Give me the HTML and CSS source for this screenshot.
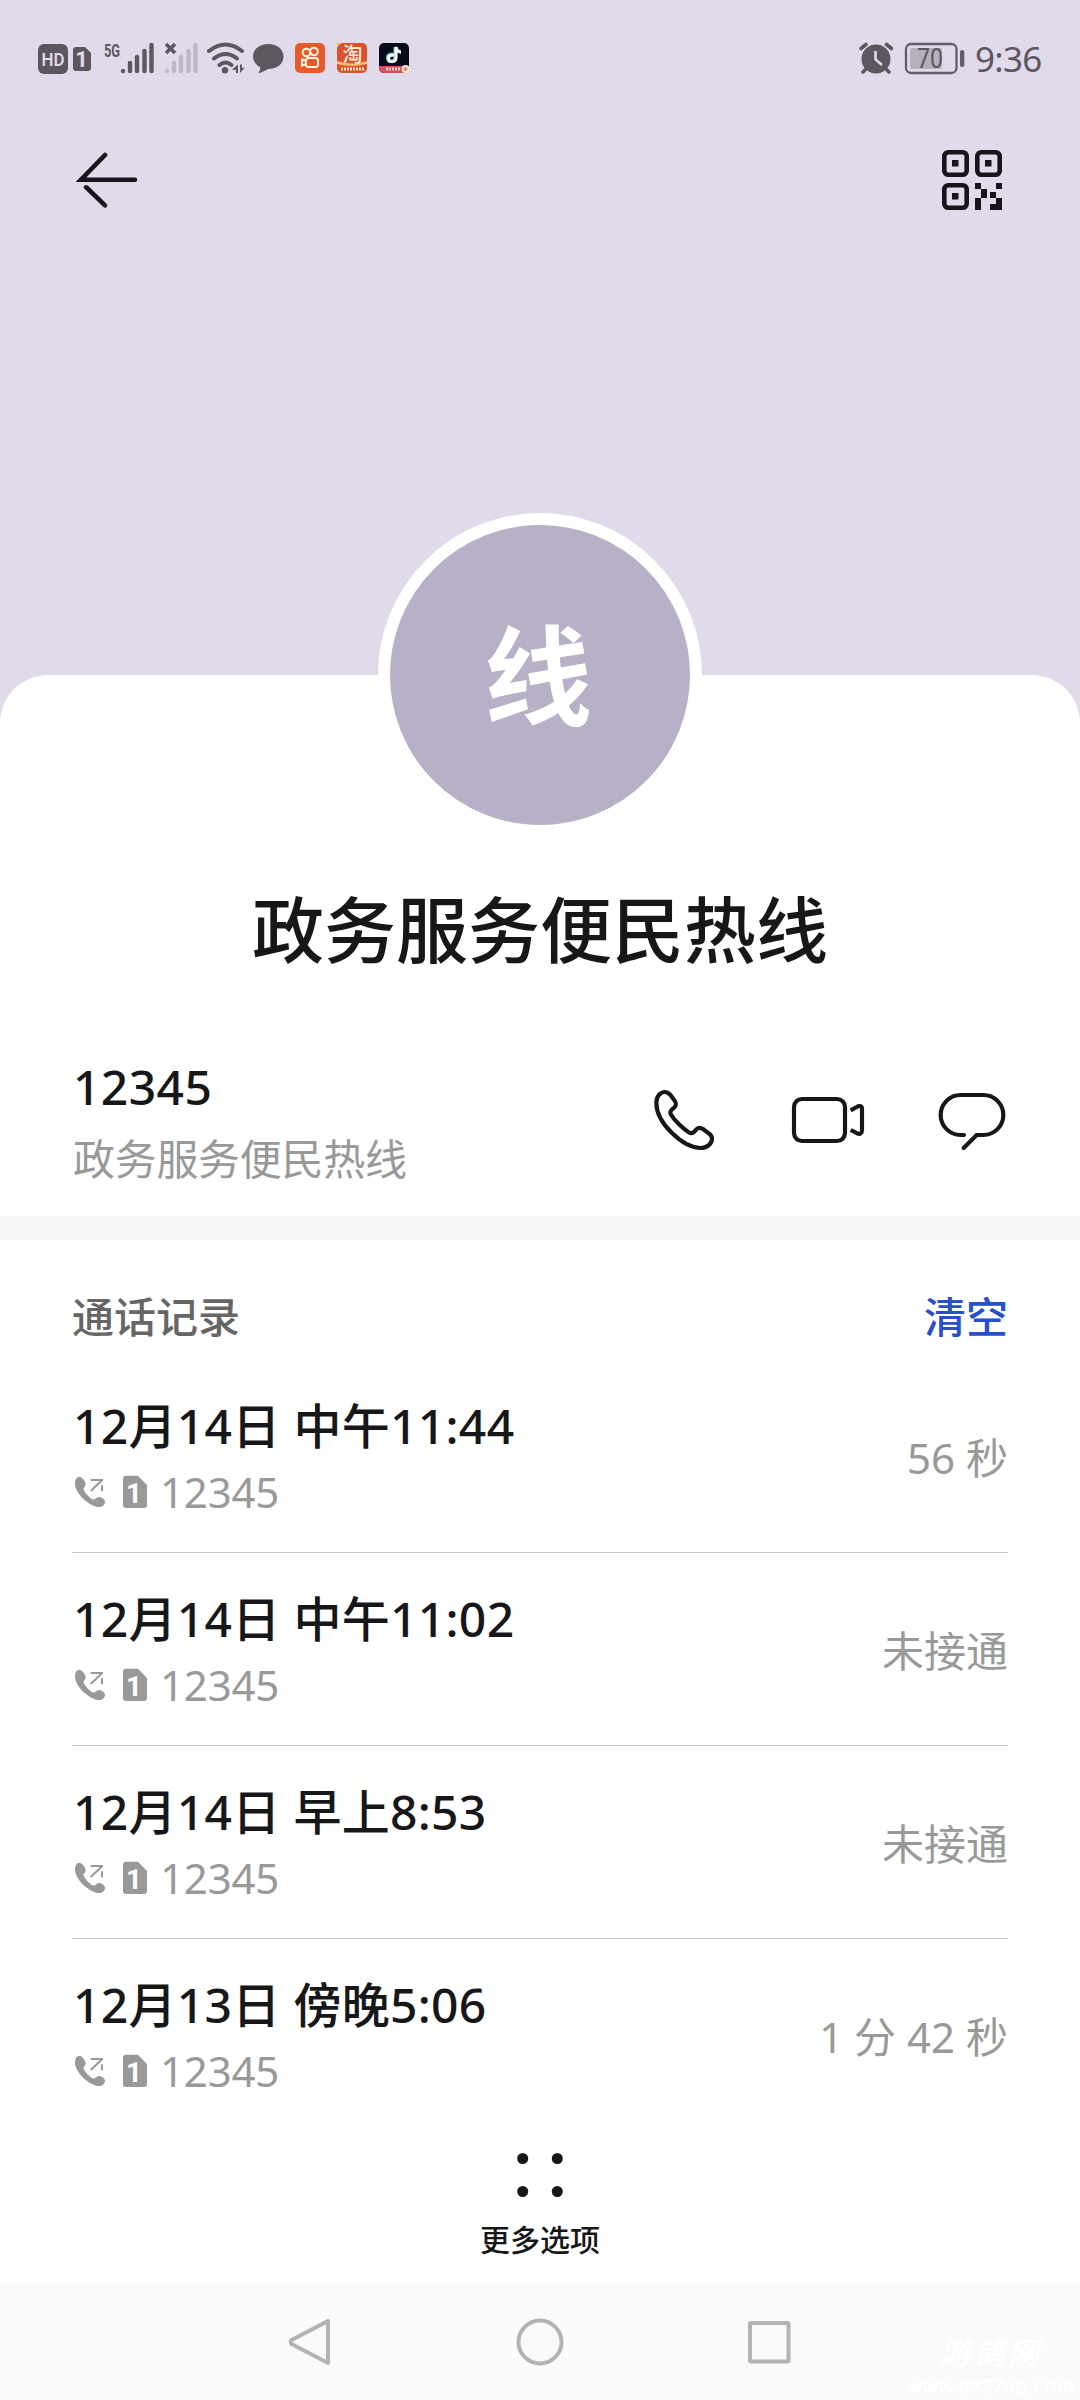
FILE: index.html
```html
<!DOCTYPE html>
<html lang="zh-CN">
<head>
<meta charset="utf-8">
<title>政务服务便民热线</title>
<link rel="stylesheet" href="styles.css">
</head>
<body>
<svg class="defs" aria-hidden="true">
  <symbol id="outgoing" viewBox="39 609 228 108">
    <path d="M58 617C50 617 45 626 45 638C45 668 90 708 118 708C128 708 135 700 135 692C135 684 122 676 115 678C108 680 104 688 98 685C88 680 74 664 71 656C69 650 77 648 77 640C77 632 66 617 58 617Z" fill="#999"/>
    <path d="M92 627H129M127 627L92 660M126 643V661" fill="none" stroke="#999" stroke-width="6"/>
    <path d="M198 614H234L261 642V702Q261 711 252 711H198Q189 711 189 702V623Q189 614 198 614Z" fill="#999"/>
    <text x="222" y="695" class="sim-digit">1</text>
  </symbol>
</svg>
<div class="screen">
  <header class="hero">
    <div class="status">
      <div class="status-left">
        <svg width="32" height="40" viewBox="38 38 32 40"><rect x="38" y="44" width="30" height="30" rx="6" fill="#5c565f"/><text x="53" y="66" class="hd" textLength="23" lengthAdjust="spacingAndGlyphs">HD</text></svg>
        <svg width="30" height="40" viewBox="70 38 30 40"><path d="M76 47H85L91 53V68Q91 71 88 71H76Q73 71 73 68V50Q73 47 76 47Z" fill="#5c565f"/><text x="81.5" y="67" class="sim">1</text></svg>
        <svg width="60" height="40" viewBox="100 38 60 40"><text x="112" y="56.500" class="net" textLength="16" lengthAdjust="spacingAndGlyphs">5G</text><path d="M123 71V71M130 63V71M137 57V71M144.500 51V71M151.500 45V71" class="bars"/></svg>
        <svg width="42" height="40" viewBox="160 38 42 40"><path d="M166 44L175 53M175 44L166 53" class="cross"/><path d="M167 71V71M174 63V71M181 57V71M188.500 51V71M195.500 45V71" class="bars dim"/></svg>
        <svg width="48" height="40" viewBox="202 38 48 40"><path d="M209 51Q225.500 38 242 51M214 58.500Q225.500 49.500 237 58.500M219.500 65Q225.500 60 231.500 65" class="wifi"/><circle cx="225" cy="70.300" r="3.200" fill="#5c565f"/><path d="M232 69.500L238 64.500V73H236V70ZM240 64.500V73L245 67.500L242 68V64.500Z" fill="#5c565f"/></svg>
        <svg width="40" height="40" viewBox="250 38 40 40"><path d="M268.500 44C277 44 283.500 49 283.500 56.500C283.500 64 277 69 268.500 69C264 71 261 73 258 73C260 71 260.500 69 260 67C256 65 253 61 253 56.500C253 49 260 44 268.500 44Z" fill="#5c565f"/></svg>
        <svg width="41" height="40" viewBox="290 38 41 40"><rect x="295" y="43" width="30" height="30" rx="5" fill="#e65a2c"/><g fill="none" stroke="#fff2df" stroke-width="2"><circle cx="306.500" cy="52.500" r="3.800"/><circle cx="314" cy="51.500" r="3.800"/><rect x="306" y="58" width="12" height="9" rx="2.500"/><path d="M306 61L302 59.500V65.500L306 64"/></g></svg>
        <svg width="42" height="40" viewBox="331 38 42 40"><rect x="337" y="43" width="30" height="30" rx="5" fill="#da512c"/><path d="M337 48Q340 43 343 43H337ZM337 61Q352 66 367 61V64Q352 68 337 64Z" fill="#f3bd78"/><text x="352.500" y="62" class="tao">淘</text><path d="M341 69H364" stroke="#ffe0b5" stroke-width="3" stroke-dasharray="2 1"/></svg>
        <svg width="42" height="40" viewBox="373 38 42 40"><rect x="379" y="43" width="30" height="30" rx="5" fill="#080b19"/><path d="M379 66H409V68Q409 73 404 73H384Q379 73 379 68Z" fill="#d74d5c"/><g fill="none" stroke-width="3"><path d="M393 54Q387 54 387.500 58Q388 62 392 61.500Q395 61 395 58V47Q396 52 401 52" stroke="#4cd5d7"/><path d="M394 55Q388 55 388.500 58.500Q389 62 392.500 61.500Q396 61 396 58V47Q397 52 401 52" stroke="#fff"/></g><path d="M386 69H400" stroke="#ffc5c5" stroke-width="3" stroke-dasharray="2 1"/><circle cx="405.500" cy="69" r="4" fill="#ffe3c8"/><path d="M405.500 67V71M403.500 69H407.500" stroke="#df5b58"/></svg>
      </div>
      <div class="status-right">
        <svg width="43" height="40" viewBox="857 38 43 40"><circle cx="876" cy="59" r="14.500" fill="#5c565f"/><path d="M861 48.500L866 44.500M891.500 48.500L886.500 44.500M866 69L863 72M886 69L889 72" class="alarm"/><path d="M875.500 51V59.500L882 65" fill="none" stroke="#e1daea" stroke-width="2.600"/></svg>
        <svg width="68" height="40" viewBox="900 38 68 40"><rect x="906" y="44" width="50.500" height="29" rx="5" fill="none" stroke="#625d66" stroke-width="2.300"/><rect x="910" y="48" width="32" height="21" rx="2" fill="#b5b0bc"/><rect x="960" y="50" width="4.300" height="17" rx="2" fill="#625d66"/><text x="930" y="68" class="pct" textLength="26" lengthAdjust="spacingAndGlyphs">70</text></svg>
        <span class="clock">9:36</span>
      </div>
    </div>
    <div class="toolbar">
      <svg width="64" height="64" viewBox="76 148 64 64" fill="none" stroke="#17151a" stroke-width="4.600" stroke-linecap="round"><path d="M105 155L81 179.700H135"/><path d="M86 187L105 205.300"/><path d="M82 184.500H92" stroke="#e1daea" stroke-width="1.500"/></svg>
      <svg width="60" height="60" viewBox="942 150 60 60"><g fill="none" stroke="#17151a" stroke-width="4.600"><rect x="944.300" y="152.300" width="22.400" height="22.400" rx="4"/><rect x="977.300" y="152.300" width="22.400" height="22.400" rx="4"/><rect x="944.300" y="185.300" width="22.400" height="22.400" rx="4"/></g><path fill="#17151a" d="M952 160h6.500v6.500h-6.500zM985 160h6.500v6.500h-6.500zM952 193h6.500v6.500h-6.500zM975 183h6v6h-6zM981 189h6v9h-6zM975 198h6v12h-6zM996 183h6v6h-6zM990 192h6v6h-6zM996 198h6v12h-12v-6h6z"/></svg>
    </div>
  </header>

  <main class="sheet">
    <div class="avatar">线</div>
    <h1 class="name">政务服务便民热线</h1>
    <section class="contact">
      <div class="contact-text">
        <div class="number">12345</div>
        <div class="label">政务服务便民热线</div>
      </div>
      <div class="actions">
        <svg width="68" height="68" viewBox="60 78 204 204"><path d="M104 96C92 96 79 108 79 128C79 190 160 264 212 264C232 264 246 250 246 236C246 228 242 224 236 220L220 208C209 201 203 203 198 209C192 217 186 222 178 218C158 206 132 180 122 162C118 154 124 150 130 145C138 139 141 131 134 122L122 106C116 98 110 96 104 96Z"/></svg>
        <svg width="76" height="68" viewBox="480 78 228 204"><rect x="492" y="117" width="153" height="126" rx="24"/><path d="M662 151L680 141C690 135 696 139 696 147V211C696 221 690 224 682 220L662 210"/></svg>
        <svg width="72" height="68" viewBox="918 78 216 204"><path stroke-linecap="round" d="M1002 225H992A60 60 0 0 1 992 105H1060A60 60 0 0 1 1060 225H1040L1001 264"/></svg>
      </div>
    </section>
    <div class="divider"></div>
    <section class="history">
      <div class="history-head"><h2>通话记录</h2><span class="clear">清空</span></div>
      <div class="call"><div><div class="when">12月14日 中午11:44</div><div class="via"><svg width="76" height="36"><use href="#outgoing"/></svg><span>12345</span></div></div><div class="duration">56 秒</div></div>
      <div class="call"><div><div class="when">12月14日 中午11:02</div><div class="via"><svg width="76" height="36"><use href="#outgoing"/></svg><span>12345</span></div></div><div class="duration">未接通</div></div>
      <div class="call"><div><div class="when">12月14日 早上8:53</div><div class="via"><svg width="76" height="36"><use href="#outgoing"/></svg><span>12345</span></div></div><div class="duration">未接通</div></div>
      <div class="call"><div><div class="when">12月13日 傍晚5:06</div><div class="via"><svg width="76" height="36"><use href="#outgoing"/></svg><span>12345</span></div></div><div class="duration">1 分 42 秒</div></div>
    </section>
    <div class="more">
      <svg width="48" height="48" viewBox="0 0 48 48" fill="#17171a"><circle cx="6.700" cy="7.500" r="5.500"/><circle cx="41.300" cy="7.500" r="5.500"/><circle cx="6.700" cy="40.500" r="5.500"/><circle cx="41.300" cy="40.500" r="5.500"/></svg>
      <span>更多选项</span>
    </div>
  </main>

  <nav class="navbar">
    <svg width="50" height="50" viewBox="284 2317 50 50"><path d="M327 2321V2363L290.500 2344Q289 2342 290.500 2340Z"/></svg>
    <svg width="50" height="50" viewBox="515 2317 50 50"><circle cx="540" cy="2342" r="21.500"/></svg>
    <svg width="50" height="50" viewBox="745 2317 50 50"><rect x="750" y="2323" width="38.500" height="38.500" rx="1"/></svg>
    <div class="watermark"><span class="site">游鸽网</span><span class="url">www.0827ug.com</span></div>
  </nav>
</div>
</body>
</html>
```
FILE: styles.css
```css
* { box-sizing: border-box; }
body { margin: 0; font-family: "Noto Sans", "Noto Sans CJK SC", sans-serif; color: #17171a; }
svg { display: block; flex: none; }
h1, h2 { margin: 0; }
.defs { display: none; }
.screen { width: 1080px; height: 2400px; display: flex; flex-direction: column; background: #e1daea; overflow: hidden; }

.hero { height: 675px; flex: none; }
.status { height: 116px; padding: 0 38px; display: flex; justify-content: space-between; align-items: center; }
.status-left, .status-right { display: flex; align-items: center; }
.status text { text-anchor: middle; font-family: Roboto, sans-serif; fill: #5c565f; }
.status .hd { font-size: 19px; font-weight: 600; fill: #e1daea; }
.status .sim { font-size: 22px; font-weight: 700; fill: #e1daea; }
.status .net { font-size: 19px; font-weight: 700; }
.status .tao { font-family: "Noto Sans CJK SC", sans-serif; font-size: 20px; font-weight: 500; fill: #fff0dc; }
.status .pct { font-size: 27px; font-weight: 400; }
.bars { stroke: #5c565f; stroke-width: 4.4; stroke-linecap: round; }
.dim { stroke: #beb7c6; }
.cross { stroke: #5c565f; stroke-width: 3.5; }
.wifi { fill: none; stroke: #5c565f; stroke-width: 4; stroke-linecap: round; }
.alarm { stroke: #5c565f; stroke-width: 3.6; stroke-linecap: round; }
.clock { width: 67px; margin-left: 7px; font-size: 35px; line-height: 40px; letter-spacing: -0.7px; color: #5c565f; white-space: nowrap; padding-top: 2px; }
.toolbar { height: 128px; padding: 0 78px 0 76px; display: flex; align-items: center; justify-content: space-between; }

.sheet { height: 1609px; flex: none; background: #fff; border-radius: 48px 48px 0 0; display: flex; flex-direction: column; align-items: center; }
.avatar { width: 324px; height: 324px; flex: none; margin-top: -162px; padding-right: 4px; border: 12px solid #fff; border-radius: 50%; background: #b8b0c6; color: #fff; font: 700 108px/290px "Noto Sans CJK SC", sans-serif; text-align: center; }
.name { margin-top: 39px; font: 500 72px/100px "Noto Sans CJK SC", sans-serif; }
.contact { width: 100%; margin-top: 59px; height: 181px; padding: 22px 72px 0 73px; display: flex; justify-content: space-between; }
.number { font-size: 48px; line-height: 60px; font-weight: 500; letter-spacing: 0.4px; }
.label { margin-top: 14px; font-size: 42px; line-height: 56px; letter-spacing: -0.3px; color: #999; }
.actions { display: flex; margin-top: 29px; }
.actions svg { fill: none; stroke: #17171a; stroke-width: 12.5; }
.actions svg + svg { margin-left: 72px; }
.actions svg + svg + svg { margin-left: 70px; }
.divider { width: 100%; height: 24px; flex: none; background: #f6f6f6; }

.history { width: 936px; }
.history-head { height: 120px; padding-top: 49px; display: flex; justify-content: space-between; }
.history-head h2, .clear { font-size: 42px; line-height: 56px; font-weight: 500; color: #666; }
.clear { color: #2850ca; }
.call { height: 193px; padding: 36px 0 0 1px; display: flex; justify-content: space-between; border-bottom: 1px solid #c8c8c8; }
.call:last-child { border-bottom: 0; }
.when { font-size: 48px; line-height: 60px; font-weight: 500; letter-spacing: 0.3px; }
.via { height: 60px; margin-top: 6px; display: flex; align-items: center; gap: 11px; font-size: 42px; line-height: 56px; letter-spacing: -0.2px; color: #999; }
.sim-digit { font: 700 84px Roboto, sans-serif; fill: #fff; text-anchor: middle; }
.duration { margin-top: 34px; font-size: 42px; line-height: 56px; color: #999; }

.more { display: flex; flex-direction: column; align-items: center; margin-top: 19px; }
.more span { margin-top: 17px; font: 500 30px/44px "Noto Sans CJK SC", sans-serif; }

.navbar { position: relative; height: 116px; flex: none; background: #fafafa; display: flex; justify-content: center; align-items: center; gap: 180px; }
.navbar svg { fill: none; stroke: #b3b3b3; stroke-width: 4; stroke-linejoin: round; }
.watermark { position: absolute; right: 6px; bottom: 2px; width: 166px; display: flex; flex-direction: column; align-items: center; gap: 2px; color: #fff; font: italic 700 18px "Liberation Sans", "Noto Sans CJK SC", sans-serif; }
.site { font-size: 31px; line-height: 36px; letter-spacing: 3px; }
.url { font-size: 20px; line-height: 24px; }
```
